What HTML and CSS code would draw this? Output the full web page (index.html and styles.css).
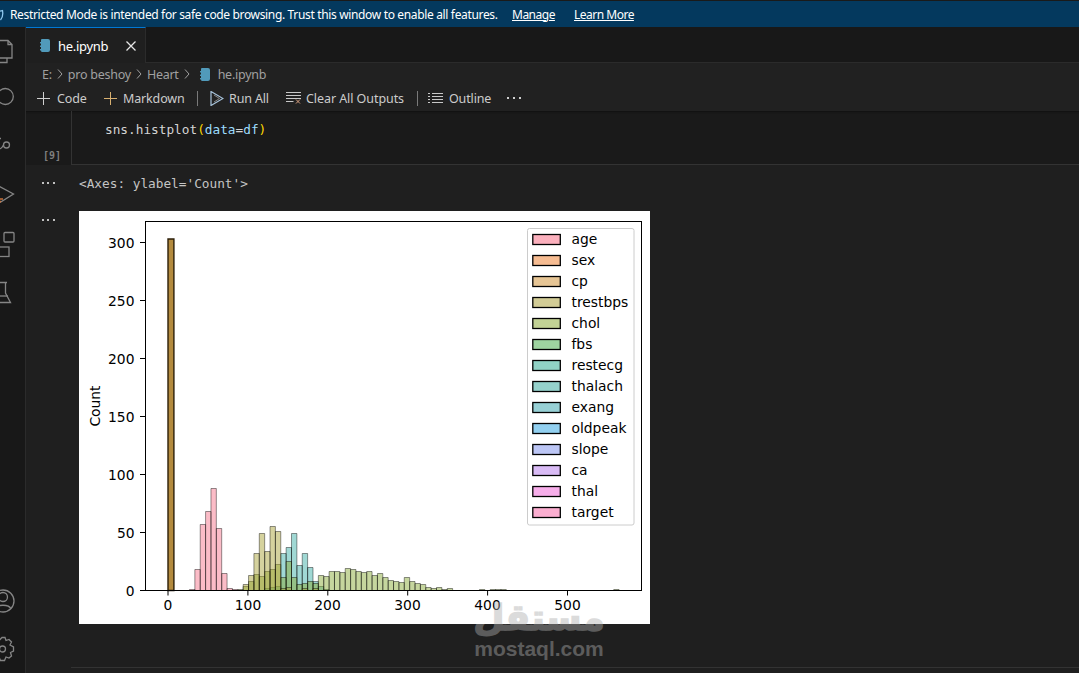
FILE: index.html
```html
<!DOCTYPE html>
<html lang="en">
<head>
<meta charset="utf-8">
<title>he.ipynb</title>
<link rel="stylesheet" href="styles.css">
</head>
<body>
<header class="banner">
  <svg class="shield" width="10" height="26" viewBox="0 0 10 26"><path d="M-3 10.500c2 0 4-.5 5.500-1 .5 3 .5 7-2 9.500" fill="none" stroke="#8fc8ee" stroke-width="1.300"/></svg>
  <span class="banner-msg">Restricted Mode is intended for safe code browsing. Trust this window to enable all features.</span>
  <a class="banner-link">Manage</a>
  <a class="banner-link">Learn More</a>
</header>
<div class="workbench">
  <nav class="activity">
    <svg width="25" height="646" viewBox="0 27 25 646" class="activity-icons">
      <path d="M-2 40.500H8L12 44.500V58H-2M8 40.500V44.500H12M7 58V62.500H-3"/>
      <circle cx="5.300" cy="96.500" r="8"/>
      <circle cx="6.500" cy="145" r="3"/>
      <path d="M3.500 145C2 148 0 149-1 149M-1 138.500H1M-1 157H0"/>
      <path d="M-3 185L13.500 194L0 202.500"/>
      <path d="M1 201L-1 203M0 199L3 199" class="accent"/>
      <rect x="4" y="232.500" width="10" height="9.500" rx="1"/>
      <rect x="-1" y="247" width="10" height="9.500"/>
      <path d="M-2 246.500H0M-1 237V246"/>
      <path d="M-1 282.500H7M5.500 282.500V293L10.500 302.500H-3"/>
      <path d="M-3 296H8"/>
      <circle cx="3" cy="601" r="11"/>
      <circle cx="3" cy="597" r="4.500"/>
      <path d="M-5 609C-3 604 9 604 11 609"/>
      <path d="M2 637.500L5 637.500L6 640.500L9 639.500L11.500 642L10 645L13.500 647V651L10.500 652.500L11.500 656L9 658L6 657L4.500 660.500H0.500L-1 657L-4 658L-6 656L-5 652.500L-8 651V647L-5 645L-6 642L-4 639.500L-1 640.500Z"/>
      <circle cx="2.500" cy="649" r="3"/>
    </svg>
  </nav>
  <main class="main">
    <div class="tabs">
      <div class="tab">
        <svg class="nb-icon" width="10" height="13" viewBox="0 0 10 13"><path d="M1.500 0H8a2 2 0 0 1 2 2V11a2 2 0 0 1-2 2H1.500L1 11.500H0V10H1V8H0V6.500H1V4.500H0V3H1V1Z" fill="#519aba"/></svg>
        <span class="tab-name">he.ipynb</span>
        <svg class="tab-close" width="10" height="10" viewBox="0 0 10 10"><path d="M.5.500L9.500 9.500M9.500.500L.5 9.500" stroke="#e6e6e6" stroke-width="1.300"/></svg>
      </div>
    </div>
    <div class="crumbs">
      <span>E:</span>
      <svg class="chev" width="6" height="10" viewBox="0 0 6 10"><path d="M1 .5L5 5L1 9.500"/></svg>
      <span>pro beshoy</span>
      <svg class="chev" width="6" height="10" viewBox="0 0 6 10"><path d="M1 .5L5 5L1 9.500"/></svg>
      <span>Heart</span>
      <svg class="chev" width="6" height="10" viewBox="0 0 6 10"><path d="M1 .5L5 5L1 9.500"/></svg>
      <svg class="nb-icon crumb-file" width="10" height="13" viewBox="0 0 10 13"><path d="M1.500 0H8a2 2 0 0 1 2 2V11a2 2 0 0 1-2 2H1.500L1 11.500H0V10H1V8H0V6.500H1V4.500H0V3H1V1Z" fill="#519aba"/></svg>
      <span>he.ipynb</span>
    </div>
    <div class="toolbar">
      <div class="tb-item tb-code">
        <svg class="tb-icon" width="13" height="13" viewBox="0 0 13 13"><path d="M6.500 0V13M0 6.500H13" stroke="#d0d0d0"/></svg><span>Code</span>
      </div>
      <div class="tb-item tb-md">
        <svg class="tb-icon" width="13" height="13" viewBox="0 0 13 13"><path d="M6.500 0V13M0 6.500H13" stroke="#d8b070"/></svg><span>Markdown</span>
      </div>
      <i class="tb-sep"></i>
      <div class="tb-item tb-run">
        <svg class="tb-icon" width="14" height="15" viewBox="0 0 14 15"><path d="M1 .5L13 7.500L1 14.500Z" stroke="#a8c4dc" fill="none" stroke-width="1.200"/><path d="M4 4L9.500 7.500L4 11" stroke="#8a8a8a" fill="none"/></svg><span>Run All</span>
      </div>
      <div class="tb-item tb-clear">
        <svg class="tb-icon" width="15" height="12" viewBox="0 0 15 12"><path d="M0 .5H15M0 3.500H15M0 6.500H15M0 9.500H7.500" stroke="#c8c8c8"/><path d="M10 7.500L14 11.500M14 7.500L10 11.500" stroke="#d8a080"/></svg><span>Clear All Outputs</span>
      </div>
      <i class="tb-sep"></i>
      <div class="tb-item tb-outline">
        <svg class="tb-icon" width="15" height="11" viewBox="0 0 15 11"><path d="M4 .5H15M4 3.500H15M4 6.500H15M4 9.500H15M0 .5H2M0 3.500H2M0 6.500H2M0 9.500H2" stroke="#c8c8c8"/></svg><span>Outline</span>
      </div>
      <svg class="tb-more" width="14" height="2" viewBox="0 0 14 2"><path d="M0 0h2v2H0zM6 0h2v2H6zM12 0h2v2h-2z" fill="#cfcfcf"/></svg>
    </div>
    <section class="cell">
      <div class="gutter"><span class="exec">[9]</span></div>
      <div class="code"><span>sns.histplot</span><span class="tok-br">(</span><span class="tok-var">data</span><span>=</span><span class="tok-var">df</span><span class="tok-br">)</span></div>
    </section>
    <section class="out out-text">
      <svg class="dots" width="13" height="2" viewBox="0 0 13 2"><path d="M0 0h2v2H0zM5 0h2v2H5zM11 0h2v2h-2z" fill="#c0c0c0"/></svg>
      <pre class="repr">&lt;Axes: ylabel='Count'&gt;</pre>
    </section>
    <section class="out out-plot">
      <svg class="dots" width="13" height="2" viewBox="0 0 13 2"><path d="M0 0h2v2H0zM5 0h2v2H5zM11 0h2v2h-2z" fill="#c0c0c0"/></svg>
      <svg class="plot" width="571" height="413" viewBox="79 211 571 413">
        <rect x="79" y="211" width="571" height="413" fill="#fff"/>
        <g transform="translate(168 590.500) scale(5.370 1)">
          <path class="bar c-thalach" d="M18 0V-2h1V0zM19 0V-3h1V0zM20 0V-4h1V0zM21 0V-37h1V0zM22 0V-43h1V0zM23 0V-57h1V0zM24 0V-25h1V0zM25 0V-37h1V0zM26 0V-23h1V0zM27 0V-9h1V0zM28 0V-4h1V0zM29 0V-1h1V0z"/>
          <path class="bar c-chol" d="M13 0V-1h1V0zM14 0V-4h1V0zM15 0V-9h1V0zM16 0V-16h1V0zM17 0V-14h1V0zM18 0V-19h1V0zM19 0V-21h1V0zM20 0V-26h1V0zM21 0V-13h1V0zM22 0V-29h1V0zM23 0V-13h1V0zM24 0V-6h1V0zM25 0V-7h1V0zM26 0V-9h1V0zM27 0V-7h1V0zM28 0V-15h1V0zM29 0V-14h1V0zM30 0V-19h1V0zM31 0V-19h1V0zM32 0V-18h1V0zM33 0V-22h1V0zM34 0V-21h1V0zM35 0V-19h1V0zM36 0V-18h1V0zM37 0V-19h1V0zM38 0V-15h1V0zM39 0V-17h1V0zM40 0V-13h1V0zM41 0V-10h1V0zM42 0V-9h1V0zM43 0V-8h1V0zM44 0V-13h1V0zM45 0V-9h1V0zM46 0V-7h1V0zM47 0V-6h1V0zM48 0V-3h1V0zM49 0V-2h1V0zM50 0V-3h1V0zM51 0V-1h1V0zM52 0V-2h1V0zM58 0V-1h1V0zM60 0V-1h1V0zM61 0V-1h1V0zM62 0V-1h1V0zM83 0V-1h1V0z"/>
          <path class="bar c-tres" d="M14 0V-6h1V0zM15 0V-15h1V0zM16 0V-37h1V0zM17 0V-57h1V0zM18 0V-39h1V0zM19 0V-64h1V0zM20 0V-59h1V0zM21 0V-2h1V0zM22 0V-3h1V0zM25 0V-2h1V0zM27 0V-2h1V0z"/>
          <path class="bar c-age" d="M4 0V-1h1V0zM5 0V-21h1V0zM6 0V-66h1V0zM7 0V-79h1V0zM8 0V-102h1V0zM9 0V-62h1V0zM10 0V-17h1V0zM11 0V-2h1V0zM12 0V-1h1V0z"/>
          <path class="bar-zero" d="M0 0V-351.500h1.100V0z"/>
        </g>
        <g class="axes">
          <rect x="145.500" y="221.500" width="496" height="369" fill="none"/>
          <path d="M168 590.500v5M247.900 590.500v5M327.800 590.500v5M407.700 590.500v5M487.600 590.500v5M567.500 590.500v5M145 590.500h-5M145 532.500h-5M145 474.500h-5M145 416.500h-5M145 358.500h-5M145 300.500h-5M145 242.500h-5"/>
        </g>
        <g class="ticks-x">
          <text x="168" y="610">0</text><text x="248" y="610">100</text><text x="327.500" y="610">200</text><text x="407.500" y="610">300</text><text x="487.500" y="610">400</text><text x="567.500" y="610">500</text>
        </g>
        <g class="ticks-y">
          <text x="134.500" y="595.500">0</text><text x="134.500" y="537.500">50</text><text x="134.500" y="479.500">100</text><text x="134.500" y="421.500">150</text><text x="134.500" y="363.500">200</text><text x="134.500" y="305.500">250</text><text x="134.500" y="247.500">300</text>
        </g>
        <text class="ylabel" transform="translate(100 406) rotate(-90)">Count</text>
        <rect class="legend-box" x="527.500" y="228.500" width="106.500" height="296.500" rx="2"/>
        <g class="legend-patches">
          <rect x="532.800" y="234.500" width="27.500" height="10" fill="#fbb0bd"/>
          <rect x="532.800" y="255.500" width="27.500" height="10" fill="#f6bc92"/>
          <rect x="532.800" y="276.500" width="27.500" height="10" fill="#e6c595"/>
          <rect x="532.800" y="297.500" width="27.500" height="10" fill="#d2cc96"/>
          <rect x="532.800" y="318.500" width="27.500" height="10" fill="#c2d295"/>
          <rect x="532.800" y="339.500" width="27.500" height="10" fill="#9ed4a0"/>
          <rect x="532.800" y="360.500" width="27.500" height="10" fill="#90d2c5"/>
          <rect x="532.800" y="381.500" width="27.500" height="10" fill="#95d2cc"/>
          <rect x="532.800" y="402.500" width="27.500" height="10" fill="#97d0d5"/>
          <rect x="532.800" y="423.500" width="27.500" height="10" fill="#92d0f0"/>
          <rect x="532.800" y="444.500" width="27.500" height="10" fill="#bcc6f5"/>
          <rect x="532.800" y="465.500" width="27.500" height="10" fill="#d9bbf5"/>
          <rect x="532.800" y="486.500" width="27.500" height="10" fill="#f7aeea"/>
          <rect x="532.800" y="507.500" width="27.500" height="10" fill="#fbaed0"/>
        </g>
        <g class="legend-labels">
          <text x="571.500" y="244">age</text>
          <text x="571.500" y="265">sex</text>
          <text x="571.500" y="286">cp</text>
          <text x="571.500" y="307">trestbps</text>
          <text x="571.500" y="328">chol</text>
          <text x="571.500" y="349">fbs</text>
          <text x="571.500" y="370">restecg</text>
          <text x="571.500" y="391">thalach</text>
          <text x="571.500" y="412">exang</text>
          <text x="571.500" y="433">oldpeak</text>
          <text x="571.500" y="454">slope</text>
          <text x="571.500" y="475">ca</text>
          <text x="571.500" y="496">thal</text>
          <text x="571.500" y="517">target</text>
        </g>
      </svg>
    </section>
    <div class="next-cell"></div>
  </main>
</div>
<div class="watermark">
  <span class="wm-ar" lang="ar" dir="rtl">مستقل</span>
  <span class="wm-en">mostaql.com</span>
</div>
</body>
</html>
```
FILE: styles.css
```css
* { box-sizing: border-box; }
html, body { margin: 0; height: 100%; }
body {
  position: relative;
  width: 1079px;
  height: 673px;
  overflow: hidden;
  background: #1f1f1f;
  font-family: "Noto Sans", sans-serif;
  color: #cccccc;
}

/* banner */
.banner {
  height: 27px;
  border-top: 1px solid #1a1a1a;
  background: #04395e;
  display: flex;
  align-items: center;
  font-size: 12px;
  color: #fff;
}
.shield { flex: none; }
.banner-msg { width: 502px; white-space: nowrap; letter-spacing: -0.345px; }
.banner-link { width: 62px; white-space: nowrap; text-decoration: underline; letter-spacing: -0.5px; }

/* layout */
.workbench { display: flex; height: 646px; }
.activity {
  flex: none;
  width: 26px;
  background: #181818;
  border-right: 1px solid #2b2b2b;
  overflow: hidden;
}
.activity-icons { display: block; fill: none; stroke: #858585; stroke-width: 1.3; }
.activity-icons .accent { stroke: #c8703a; }
.main { flex: 1; min-width: 0; display: flex; flex-direction: column; }

/* tabs */
.tabs {
  height: 36px;
  flex: none;
  background: #181818;
  border-bottom: 1px solid #2b2b2b;
  display: flex;
}
.tab {
  width: 120px;
  height: 36px;
  background: #1f1f1f;
  border-top: 1px solid #0078d4;
  border-right: 1px solid #2b2b2b;
  display: flex;
  align-items: center;
  padding-left: 14px;
  font-size: 13px;
  color: #fff;
}
.nb-icon { flex: none; }
.tab-name { margin-left: 8px; width: 68px; letter-spacing: -0.3px; }

/* breadcrumbs */
.crumbs {
  height: 24px;
  flex: none;
  background: #212121;
  display: flex;
  align-items: center;
  gap: 5px;
  padding: 0 0 2px 16px;
  font-size: 12.500px;
  color: #a0a0a0;
  letter-spacing: -0.25px;
}
.chev { fill: none; stroke: #a0a0a0; stroke-width: 1; flex: none; }
.crumb-file { margin-left: 5px; margin-right: 3px; }

/* notebook toolbar */
.toolbar {
  height: 24px;
  flex: none;
  background: #212121;
  display: flex;
  align-items: center;
  padding: 0 0 2px 11px;
  font-size: 12.500px;
  letter-spacing: -0.15px;
  color: #cccccc;
}
.tb-item { display: flex; align-items: center; gap: 7px; white-space: nowrap; }
.tb-icon { flex: none; }
.tb-code { width: 67px; }
.tb-md { width: 93px; gap: 6px; }
.tb-run { width: 76px; margin-left: 12px; gap: 5px; }
.tb-clear { gap: 5px; width: 131px; letter-spacing: -0.07px; }
.tb-outline { width: 79px; margin-left: 10px; gap: 6px; }
.tb-sep { width: 1px; height: 15px; background: #7a7a7a; flex: none; }

/* cell */
.cell {
  height: 54px;
  flex: none;
  display: flex;
  background: #1a1a1a;
  box-shadow: inset 0 3px 2px -2px #111;
}
.gutter {
  width: 45px;
  flex: none;
  display: flex;
  align-items: flex-end;
  justify-content: flex-end;
  padding: 0 10px 4px 0;
}
.exec { font: 700 10px "DejaVu Sans Mono", monospace; color: #7f7f7f; }
.code {
  flex: 1;
  border-left: 1px solid #333;
  border-bottom: 1px solid #333;
  padding: 10px 0 0 33px;
  font: 12.750px/17px "DejaVu Sans Mono", monospace;
  color: #d4d4d4;
}
.tok-br { color: #ffd700; }
.tok-var { color: #9cdcfe; }

/* outputs */
.out { display: flex; flex: none; }
.dots { flex: none; margin-left: 16px; }
.out-text { height: 46px; padding-top: 17px; }
.repr {
  margin: -7px 0 0 24px;
  font: 12.750px/17px "DejaVu Sans Mono", monospace;
  color: #c4c4c4;
}
.out-plot { height: 456px; }
.out-plot .dots { margin-top: 8px; }
.plot { display: block; margin-left: 24px; flex: none; }

/* chart */
.bar { vector-effect: non-scaling-stroke; stroke: #000; stroke-opacity: .42; stroke-width: 1; fill-opacity: .47; }
.c-thalach { fill: #36ada4; }
.c-chol { fill: #86a831; }
.c-tres { fill: #a5a031; }
.c-age { fill: #f77189; }
.bar-zero { vector-effect: non-scaling-stroke; fill: #b38a3e; stroke: #2c1e08; stroke-width: 1.400; }
.axes { stroke: #000; stroke-width: 1; }
.plot text { font-family: "DejaVu Sans", sans-serif; font-size: 13.850px; fill: #000; }
.ticks-x { text-anchor: middle; }
.ticks-y { text-anchor: end; }
.ylabel { text-anchor: middle; }
.legend-box { fill: #fff; fill-opacity: .8; stroke: #ccc; stroke-width: 1; }
.legend-patches rect { stroke: #000; stroke-width: 1.300; }

/* next cell edge */
.next-cell { flex: 1; margin-left: 45px; border-top: 1px solid #333; }

/* watermark */
.watermark {
  position: absolute;
  left: 461px;
  top: 598px;
  width: 156px;
  display: flex;
  flex-direction: column;
  align-items: center;
  color: rgb(172, 172, 172);
  opacity: .43;
  font-family: "DejaVu Sans", sans-serif;
  font-weight: 700;
  pointer-events: none;
}
.wm-ar { font-size: 36px; line-height: 40px; -webkit-text-stroke: 1.500px rgb(172, 172, 172); }
.wm-en { font-family: "Liberation Sans", sans-serif; font-size: 21px; line-height: 22px; }
```
